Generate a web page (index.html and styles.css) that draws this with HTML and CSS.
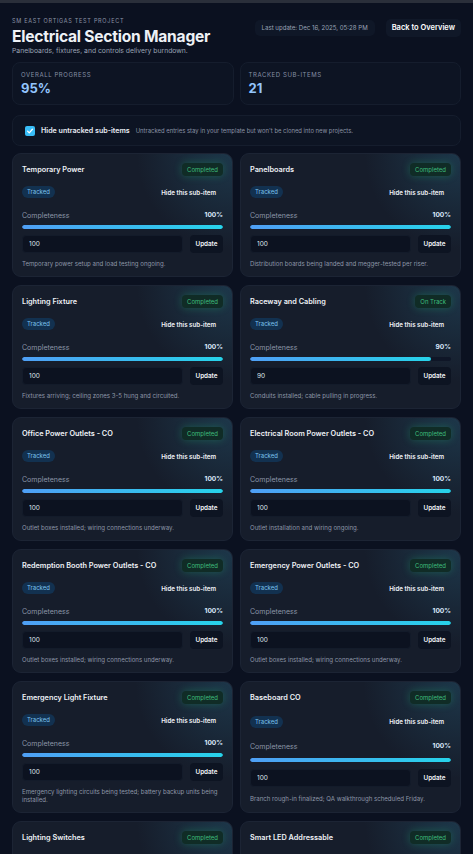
FILE: index.html
```html
<!DOCTYPE html>
<html lang="en">

<head>
    <meta charset="UTF-8">
    <meta name="viewport" content="width=device-width, initial-scale=1.0">
    <title>Electrical Section Manager</title>
    <link rel="stylesheet" href="styles.css">
</head>

<body>
    <div class="topbar"></div>
    <main class="page">
        <header class="head">
            <div>
                <p class="eyebrow">SM East Ortigas Test Project</p>
                <h1>Electrical Section Manager</h1>
                <p class="sub">Panelboards, fixtures, and controls delivery burndown.</p>
            </div>
            <div class="head-actions">
                <span class="stamp">Last update: Dec 16, 2025, 05:28 PM</span>
                <button class="back">Back to Overview</button>
            </div>
        </header>

        <section class="stats">
            <div class="stat">
                <p class="stat-label">Overall progress</p>
                <p class="stat-value">95%</p>
            </div>
            <div class="stat">
                <p class="stat-label">Tracked sub-items</p>
                <p class="stat-value">21</p>
            </div>
        </section>

        <label class="filter">
            <span class="check">
                <svg viewBox="0 0 10 10" width="8" height="8"><path d="M2 5.2 4.1 7.3 8 2.8" fill="none" stroke="#fff" stroke-width="1.6" stroke-linecap="round" stroke-linejoin="round"/></svg>
            </span>
            <strong>Hide untracked sub-items</strong>
            <span class="hint">Untracked entries stay in your template but won't be cloned into new projects.</span>
        </label>

        <section class="grid">
            <article class="card">
                <div class="card-head"><h2>Temporary Power</h2><span class="badge">Completed</span></div>
                <div class="meta"><span class="pill">Tracked</span><button class="hide">Hide this sub-item</button></div>
                <div class="label-row"><span>Completeness</span><b>100%</b></div>
                <div class="bar"><div class="fill" style="width:100%"></div></div>
                <div class="form"><input value="100"><button>Update</button></div>
                <p class="note">Temporary power setup and load testing ongoing.</p>
            </article>
            <article class="card">
                <div class="card-head"><h2>Panelboards</h2><span class="badge">Completed</span></div>
                <div class="meta"><span class="pill">Tracked</span><button class="hide">Hide this sub-item</button></div>
                <div class="label-row"><span>Completeness</span><b>100%</b></div>
                <div class="bar"><div class="fill" style="width:100%"></div></div>
                <div class="form"><input value="100"><button>Update</button></div>
                <p class="note">Distribution boards being landed and megger-tested per riser.</p>
            </article>
            <article class="card">
                <div class="card-head"><h2>Lighting Fixture</h2><span class="badge">Completed</span></div>
                <div class="meta"><span class="pill">Tracked</span><button class="hide">Hide this sub-item</button></div>
                <div class="label-row"><span>Completeness</span><b>100%</b></div>
                <div class="bar"><div class="fill" style="width:100%"></div></div>
                <div class="form"><input value="100"><button>Update</button></div>
                <p class="note">Fixtures arriving; ceiling zones 3-5 hung and circuited.</p>
            </article>
            <article class="card">
                <div class="card-head"><h2>Raceway and Cabling</h2><span class="badge">On Track</span></div>
                <div class="meta"><span class="pill">Tracked</span><button class="hide">Hide this sub-item</button></div>
                <div class="label-row"><span>Completeness</span><b>90%</b></div>
                <div class="bar"><div class="fill" style="width:90%"></div></div>
                <div class="form"><input value="90"><button>Update</button></div>
                <p class="note">Conduits installed; cable pulling in progress.</p>
            </article>
            <article class="card">
                <div class="card-head"><h2>Office Power Outlets - CO</h2><span class="badge">Completed</span></div>
                <div class="meta"><span class="pill">Tracked</span><button class="hide">Hide this sub-item</button></div>
                <div class="label-row"><span>Completeness</span><b>100%</b></div>
                <div class="bar"><div class="fill" style="width:100%"></div></div>
                <div class="form"><input value="100"><button>Update</button></div>
                <p class="note">Outlet boxes installed; wiring connections underway.</p>
            </article>
            <article class="card">
                <div class="card-head"><h2>Electrical Room Power Outlets - CO</h2><span class="badge">Completed</span></div>
                <div class="meta"><span class="pill">Tracked</span><button class="hide">Hide this sub-item</button></div>
                <div class="label-row"><span>Completeness</span><b>100%</b></div>
                <div class="bar"><div class="fill" style="width:100%"></div></div>
                <div class="form"><input value="100"><button>Update</button></div>
                <p class="note">Outlet installation and wiring ongoing.</p>
            </article>
            <article class="card">
                <div class="card-head"><h2>Redemption Booth Power Outlets - CO</h2><span class="badge">Completed</span></div>
                <div class="meta"><span class="pill">Tracked</span><button class="hide">Hide this sub-item</button></div>
                <div class="label-row"><span>Completeness</span><b>100%</b></div>
                <div class="bar"><div class="fill" style="width:100%"></div></div>
                <div class="form"><input value="100"><button>Update</button></div>
                <p class="note">Outlet boxes installed; wiring connections underway.</p>
            </article>
            <article class="card">
                <div class="card-head"><h2>Emergency Power Outlets - CO</h2><span class="badge">Completed</span></div>
                <div class="meta"><span class="pill">Tracked</span><button class="hide">Hide this sub-item</button></div>
                <div class="label-row"><span>Completeness</span><b>100%</b></div>
                <div class="bar"><div class="fill" style="width:100%"></div></div>
                <div class="form"><input value="100"><button>Update</button></div>
                <p class="note">Outlet boxes installed; wiring connections underway.</p>
            </article>
            <article class="card">
                <div class="card-head"><h2>Emergency Light Fixture</h2><span class="badge">Completed</span></div>
                <div class="meta"><span class="pill">Tracked</span><button class="hide">Hide this sub-item</button></div>
                <div class="label-row"><span>Completeness</span><b>100%</b></div>
                <div class="bar"><div class="fill" style="width:100%"></div></div>
                <div class="form"><input value="100"><button>Update</button></div>
                <p class="note">Emergency lighting circuits being tested; battery backup units being installed.</p>
            </article>
            <article class="card">
                <div class="card-head"><h2>Baseboard CO</h2><span class="badge">Completed</span></div>
                <div class="meta"><span class="pill">Tracked</span><button class="hide">Hide this sub-item</button></div>
                <div class="label-row"><span>Completeness</span><b>100%</b></div>
                <div class="bar"><div class="fill" style="width:100%"></div></div>
                <div class="form"><input value="100"><button>Update</button></div>
                <p class="note">Branch rough-in finalized; QA walkthrough scheduled Friday.</p>
            </article>
            <article class="card">
                <div class="card-head"><h2>Lighting Switches</h2><span class="badge">Completed</span></div>
                <div class="meta"><span class="pill">Tracked</span><button class="hide">Hide this sub-item</button></div>
                <div class="label-row"><span>Completeness</span><b>100%</b></div>
                <div class="bar"><div class="fill" style="width:100%"></div></div>
                <div class="form"><input value="100"><button>Update</button></div>
                <p class="note">Switch boxes set and devices terminated.</p>
            </article>
            <article class="card">
                <div class="card-head"><h2>Smart LED Addressable</h2><span class="badge">Completed</span></div>
                <div class="meta"><span class="pill">Tracked</span><button class="hide">Hide this sub-item</button></div>
                <div class="label-row"><span>Completeness</span><b>100%</b></div>
                <div class="bar"><div class="fill" style="width:100%"></div></div>
                <div class="form"><input value="100"><button>Update</button></div>
                <p class="note">Controllers addressed and scenes programmed.</p>
            </article>
        </section>
    </main>
</body>

</html>
```

FILE: styles.css
```css
* {
    margin: 0;
    padding: 0;
    box-sizing: border-box;
}

body {
    background: #0b1120;
    color: #e5e9f0;
    font-family: Inter, "Noto Sans", sans-serif;
}

.topbar {
    height: 3px;
    background: #2a2f3a;
}

.page {
    padding: 14px 12px 20px;
}

/* header */
.head {
    display: flex;
    justify-content: space-between;
    align-items: flex-start;
}

.eyebrow {
    font-size: 5.5px;
    letter-spacing: 0.13em;
    text-transform: uppercase;
    color: #8b93a5;
    line-height: 8px;
}

h1 {
    font-size: 15.6px;
    font-weight: 700;
    letter-spacing: -0.015em;
    line-height: 19px;
    margin-top: 2px;
    color: #eef1f6;
}

.sub {
    font-size: 6.8px;
    color: #9aa3b4;
    line-height: 9px;
}

.head-actions {
    display: flex;
    align-items: center;
    gap: 11px;
    margin-top: 2px;
    white-space: nowrap;
}

.stamp {
    font-size: 6.1px;
    color: #9aa3b5;
    background: #0f1727;
    padding: 4px 7px;
    border-radius: 5px;
    line-height: 8px;
}

.back {
    font: 600 7.5px Inter, sans-serif;
    color: #fff;
    background: #101828;
    border: 0;
    border-radius: 5px;
    padding: 5px 6px;
    line-height: 8px;
}

/* stats */
.stats {
    display: grid;
    grid-template-columns: 1fr 1fr;
    gap: 6px;
    margin-top: 7px;
}

.stat {
    background: #0d1423;
    border: 1px solid #151d2d;
    border-radius: 8px;
    height: 43px;
    padding: 8px 8px;
}

.stat-label {
    font-size: 6px;
    letter-spacing: 0.1em;
    text-transform: uppercase;
    color: #8690a3;
    line-height: 8px;
}

.stat-value {
    font-size: 13px;
    font-weight: 700;
    color: #93c5fd;
    line-height: 18px;
}

/* filter */
.filter {
    display: flex;
    align-items: center;
    gap: 6px;
    margin-top: 10px;
    height: 31px;
    padding: 0 12px;
    background: #0d1423;
    border: 1px solid #151d2d;
    border-radius: 8px;
}

.check {
    width: 10px;
    height: 10px;
    border-radius: 2px;
    background: #38bdf8;
    display: flex;
    align-items: center;
    justify-content: center;
}

.filter strong {
    font-size: 7.1px;
    font-weight: 600;
    color: #e8ecf3;
}

.hint {
    font-size: 5.9px;
    color: #8a93a5;
}

/* cards */
.grid {
    display: grid;
    grid-template-columns: 1fr 1fr;
    column-gap: 7px;
    row-gap: 8px;
    margin-top: 7px;
}

.card {
    display: grid;
    align-items: center;
    padding: 8px 9px 8px;
    border-radius: 9px;
    border: 1px solid #1c2434;
    background:
        radial-gradient(circle at 100% 0, rgba(45, 110, 140, 0.32), rgba(45, 110, 140, 0) 38%),
        #161d2b;
}

.card-head {
    display: flex;
    justify-content: space-between;
    align-items: center;
    height: 14px;
}

.card h2 {
    font-size: 7.3px;
    font-weight: 600;
    color: #eef1f6;
}

.badge {
    font-size: 6px;
    color: #3fbf7c;
    background: #102c26;
    border-radius: 4px;
    padding: 3px 5px;
    line-height: 7px;
    box-shadow: 0 0 8px rgba(34, 197, 120, 0.3);
}

.meta {
    display: flex;
    justify-content: space-between;
    align-items: center;
    margin-top: 10px;
    height: 12px;
}

.pill {
    font-size: 6px;
    color: #7cc4ef;
    background: #123150;
    border-radius: 6px;
    padding: 2px 5px;
    line-height: 8px;
}

.hide {
    font: 600 6.2px Inter, sans-serif;
    color: #f2f4f8;
    background: transparent;
    border: 0;
    padding: 0 7px;
}

.label-row {
    display: flex;
    justify-content: space-between;
    margin-top: 13px;
    font-size: 7px;
    line-height: 9px;
    color: #8c95a7;
}

.label-row b {
    color: #dbe8fb;
    font-weight: 700;
    font-size: 6.6px;
}

.bar {
    height: 4px;
    margin-top: 5px;
    border-radius: 3px;
    background: #0f1627;
    overflow: hidden;
}

.fill {
    height: 100%;
    border-radius: 3px;
    background: linear-gradient(90deg, #4f9ff5, #27d3ea);
}

.form {
    display: flex;
    gap: 7px;
    margin-top: 6px;
}

.form input {
    flex: 1;
    min-width: 0;
    height: 18px;
    padding: 0 6px;
    font: 6.5px Inter, sans-serif;
    color: #dfe4ec;
    background: #0c1220;
    border: 1px solid #131b2a;
    border-radius: 4px;
}

.form button {
    width: 33px;
    height: 18px;
    font: 600 6.3px Inter, sans-serif;
    color: #f2f4f8;
    background: #0d1422;
    border: 0;
    border-radius: 4px;
}

.note {
    margin-top: 7px;
    font-size: 6.1px;
    line-height: 8px;
    color: #8e97a8;
}
```
